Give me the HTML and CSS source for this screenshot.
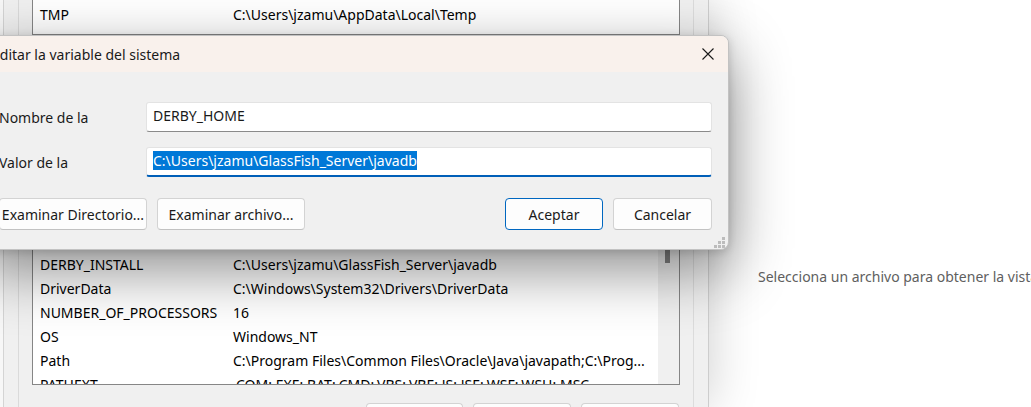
FILE: index.html
```html
<!DOCTYPE html>
<html lang="es">
<head>
<meta charset="utf-8">
<title>Editar la variable del sistema</title>
<link rel="stylesheet" href="styles.css">
</head>
<body>
<div class="desktop">
  <div class="envwin">
    <div class="edge edge-a"></div>
    <div class="edge edge-b"></div>
    <div class="edge edge-c"></div>
    <div class="main">
      <div class="list userlist">
        <div class="rows">
          <div class="row"><span class="c1">TMP</span><span class="c2">C:\Users\jzamu\AppData\Local\Temp</span></div>
        </div>
      </div>
      <div class="list syslist">
        <div class="rows">
          <div class="row"><span class="c1">DERBY_INSTALL</span><span class="c2">C:\Users\jzamu\GlassFish_Server\javadb</span></div>
          <div class="row"><span class="c1">DriverData</span><span class="c2">C:\Windows\System32\Drivers\DriverData</span></div>
          <div class="row"><span class="c1">NUMBER_OF_PROCESSORS</span><span class="c2">16</span></div>
          <div class="row"><span class="c1">OS</span><span class="c2">Windows_NT</span></div>
          <div class="row"><span class="c1">Path</span><span class="c2">C:\Program Files\Common Files\Oracle\Java\javapath;C:\Prog...</span></div>
          <div class="row"><span class="c1">PATHEXT</span><span class="c2">.COM;.EXE;.BAT;.CMD;.VBS;.VBE;.JS;.JSE;.WSF;.WSH;.MSC</span></div>
        </div>
        <div class="vscroll"><div class="thumb"></div></div>
      </div>
      <div class="btnrow">
        <div class="btn w97">Nueva...</div>
        <div class="btn w98">Editar...</div>
        <div class="btn w98">Eliminar</div>
      </div>
    </div>
    <div class="edge edge-d"></div>
    <div class="edge edge-e"></div>
  </div>
  <div class="pane">
    <p class="hint">Selecciona un archivo para obtener la vista previa.</p>
  </div>

  <div class="dialog">
    <div class="dlg-title">
      <span class="dlg-caption">Editar la variable del sistema</span>
      <svg class="close" width="12" height="12" viewBox="0 0 12 12"><path d="M0.5 0.5 L11.5 11.5 M11.5 0.5 L0.5 11.5" stroke="#1a1a1a" stroke-width="1.1" fill="none"/></svg>
    </div>
    <div class="dlg-body">
      <div class="field">
        <div class="label"><span class="label-text">Nombre de la variable:</span></div>
        <div class="input"><span>DERBY_HOME</span></div>
      </div>
      <div class="field">
        <div class="label"><span class="label-text">Valor de la variable:</span></div>
        <div class="input focus"><span class="sel">C:\Users\jzamu\GlassFish_Server\javadb</span></div>
      </div>
      <div class="dlg-buttons">
        <div class="btn w148">Examinar Directorio...</div>
        <div class="btn w148">Examinar archivo...</div>
        <div class="spacer"></div>
        <div class="btn primary w98">Aceptar</div>
        <div class="btn w99">Cancelar</div>
      </div>
    </div>
    <svg class="grip" width="11" height="11" viewBox="0 0 11 11">
      <rect x="8" y="0" width="3" height="3" fill="#bcbcbc"/>
      <rect x="4" y="4" width="3" height="3" fill="#bcbcbc"/>
      <rect x="8" y="4" width="3" height="3" fill="#bcbcbc"/>
      <rect x="0" y="8" width="3" height="3" fill="#bcbcbc"/>
      <rect x="4" y="8" width="3" height="3" fill="#bcbcbc"/>
      <rect x="8" y="8" width="3" height="3" fill="#bcbcbc"/>
    </svg>
  </div>
</div>
</body>
</html>
```

FILE: styles.css
```css
* { box-sizing: border-box; }
html, body { margin: 0; padding: 0; }
body {
  width: 1031px;
  height: 407px;
  overflow: hidden;
  font-family: "Noto Sans", "Open Sans", sans-serif;
  font-size: 14px;
  color: #000;
  background: #fff;
}
.desktop {
  position: relative;
  display: flex;
  width: 1031px;
  height: 407px;
  overflow: hidden;
}

/* background window: environment variables */
.envwin {
  position: relative;
  z-index: 1;
  display: flex;
  flex: none;
  width: 709px;
  height: 407px;
  background: #f0f0f0;
  border-right: 1px solid #cdcdcd;
  box-shadow: 0 0 48px rgba(0, 0, 0, 0.2);
}
.edge { flex: none; height: 100%; }
.edge-a { width: 4px; background: #f7f7f7; border-right: 1px solid #d4d4d4; }
.edge-b { width: 15px; border-right: 1px solid #dadada; }
.edge-c { width: 13px; }
.edge-d { width: 14px; border-right: 1px solid #dcdcdc; }
.edge-e { width: 14px; }
.main {
  flex: none;
  width: 648px;
  display: flex;
  flex-direction: column;
}
.main > * { flex: none; }
.list {
  background: #fff;
  border: 1px solid #868686;
}
.userlist {
  height: 35px;
  border-top: none;
  padding-top: 3px;
}
.row {
  display: flex;
  height: 24px;
  line-height: 24px;
  white-space: nowrap;
}
.c1 { flex: none; width: 200px; padding-left: 7px; }
.c2 { flex: none; }
.syslist {
  margin-top: 209px;
  height: 141px;
  display: flex;
}
.syslist .rows {
  flex: 1;
  min-width: 0;
  padding-top: 8px;
  overflow: hidden;
}
.vscroll {
  flex: none;
  width: 21px;
  background: #f0f0f0;
  padding: 5px 0 0 7px;
}
.thumb { width: 5px; height: 13px; background: #838383; }
.btnrow {
  display: flex;
  justify-content: flex-end;
  gap: 10px;
  margin-top: 18px;
  padding-right: 1px;
}

.btn {
  flex: none;
  height: 32px;
  display: flex;
  align-items: center;
  justify-content: center;
  line-height: 19px;
  white-space: nowrap;
  background: #fdfdfd;
  border: 1px solid #d3d3d3;
  border-bottom-color: #c2c2c2;
  border-radius: 4px;
  color: #1a1a1a;
}
.btn.primary { border-color: #0067c0; }
.w97 { width: 97px; }
.w98 { width: 98px; }
.w99 { width: 99px; }
.w148 { width: 148px; }

/* right preview pane */
.pane {
  flex: 1;
  min-width: 0;
  overflow: hidden;
  padding: 267px 0 0 49px;
  background: #fff;
}
.hint {
  margin: 0;
  white-space: nowrap;
  line-height: 19px;
  color: #606060;
}

/* dialog */
.dialog {
  position: absolute;
  z-index: 2;
  left: -20px;
  top: 35px;
  width: 749px;
  height: 215px;
  display: flex;
  flex-direction: column;
  background: #f0f0f0;
  border: 1px solid #c2c2c2;
  border-radius: 8px;
  overflow: hidden;
  box-shadow: 0 20px 60px rgba(0, 0, 0, 0.45), 0 2px 8px rgba(0, 0, 0, 0.14);
}
.dlg-title {
  flex: none;
  height: 36px;
  display: flex;
  align-items: center;
  justify-content: space-between;
  padding: 0 14px 0 11px;
  background: #f9f1ec;
  line-height: 19px;
  color: #1a1a1a;
}
.close { flex: none; display: block; margin-top: -1px; }
.dlg-body {
  flex: 1;
  display: flex;
  flex-direction: column;
  padding: 30px 16px 0 18px;
}
.field { display: flex; height: 30px; }
.field + .field { margin-top: 15px; }
.label {
  flex: none;
  width: 147px;
  padding-top: 6px;
  color: #1a1a1a;
}
.label-text {
  display: block;
  width: 125px;
  height: 19px;
  line-height: 19px;
  overflow: hidden;
}
.field:last-of-type .label-text { margin-left: -2px; }
.input {
  flex: 1;
  display: flex;
  align-items: center;
  padding: 0 0 3px 6px;
  line-height: 19px;
  white-space: nowrap;
  background: #fff;
  border: 1px solid #e3e3e3;
  border-bottom-color: #8a8a8a;
  border-radius: 3px;
  color: #1a1a1a;
}
.input.focus { border-bottom: 2px solid #005fb8; padding-bottom: 2px; }
.sel { background: #0078d7; color: #fff; }
.dlg-buttons {
  display: flex;
  gap: 10px;
  margin-top: 21px;
}
.spacer { flex: 1; }
.grip {
  position: absolute;
  right: 3px;
  bottom: 1px;
  display: block;
}
```
